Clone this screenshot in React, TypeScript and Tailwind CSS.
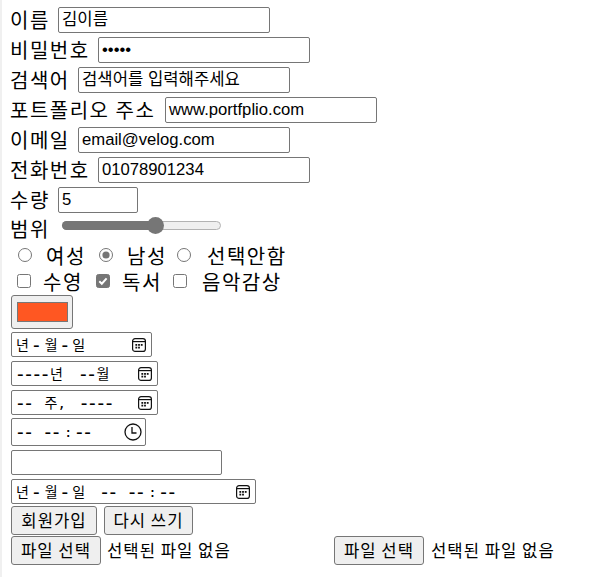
import React from "react";

const KR = "font-['Noto_Sans_CJK_KR',sans-serif]";
const INP = "font-['Liberation_Sans','Noto_Sans_CJK_KR',sans-serif]";
const MONO = "font-['DejaVu_Sans_Mono','Noto_Sans_CJK_KR',monospace]";

function TextField({ label, value, labelClass, inputClass }: { label: string; value: string; labelClass: string; inputClass: string }) {
  return (
    <div className="flex items-center h-[30px]">
      <span className={`leading-none whitespace-pre tracking-[1.5px] ${labelClass}`}>{label}</span>
      <div
        className={`ml-[8px] h-[26px] border border-[#767676] rounded-[2px] bg-white flex items-center pl-[3px] ${INP} text-[16.67px] leading-none whitespace-pre ${inputClass}`}
      >
        {value}
      </div>
    </div>
  );
}

function Radio({ checked }: { checked?: boolean }) {
  return (
    <svg width="14" height="14" viewBox="0 0 14 14" className="shrink-0 block">
      <circle cx="7" cy="7" r="6.5" fill="white" stroke="#767676" strokeWidth="1" />
      {checked && <circle cx="7" cy="7" r="3.6" fill="#767676" />}
    </svg>
  );
}

function Check({ checked }: { checked?: boolean }) {
  return (
    <svg width="14" height="14" viewBox="0 0 14 14" className="shrink-0 block">
      <rect x="0.5" y="0.5" width="13" height="13" rx="2" fill={checked ? "#767676" : "white"} stroke="#767676" />
      {checked && <path d="M3.3 7.3 L5.8 9.7 L10.6 4.4" stroke="white" strokeWidth="2" fill="none" />}
    </svg>
  );
}

function CalIcon() {
  return (
    <svg width="14" height="14" viewBox="0 0 14 14" className="shrink-0 block">
      <rect x="0.6" y="0.6" width="12.8" height="12.8" rx="2.5" fill="none" stroke="#111" strokeWidth="1.2" />
      <line x1="0.6" y1="3.6" x2="13.4" y2="3.6" stroke="#111" strokeWidth="1.2" />
      <rect x="3.4" y="6" width="1.8" height="1.8" fill="#111" />
      <rect x="6.1" y="6" width="1.8" height="1.8" fill="#111" />
      <rect x="8.8" y="6" width="1.8" height="1.8" fill="#111" />
      <rect x="3.4" y="8.7" width="1.8" height="1.8" fill="#111" />
      <rect x="6.1" y="8.7" width="1.8" height="1.8" fill="#111" />
    </svg>
  );
}

function ClockIcon() {
  return (
    <svg width="18" height="18" viewBox="0 0 18 18" className="shrink-0 block">
      <circle cx="9" cy="9" r="8" fill="none" stroke="#111" strokeWidth="1.3" />
      <path d="M8 4 L8 10 L12.5 10" fill="none" stroke="#111" strokeWidth="1.3" />
    </svg>
  );
}

function Dashes({ n, className = "" }: { n: number; className?: string }) {
  return (
    <span className={`font-['Liberation_Sans',sans-serif] text-[20px] tracking-[1.6px] leading-none ${className}`}>
      {"-".repeat(n)}
    </span>
  );
}

function TimePieces() {
  return (
    <>
      <Dashes n={2} />
      <Dashes n={2} className="ml-[11px]" />
      <span className="ml-[3px]">:</span>
      <Dashes n={2} className="ml-[3.5px]" />
    </>
  );
}

function DatePieces() {
  return (
    <>
      <span>년</span>
      <Dashes n={1} className="ml-[4px]" />
      <span className="ml-[3.5px]">월</span>
      <Dashes n={1} className="ml-[4px]" />
      <span className="ml-[2.5px]">일</span>
    </>
  );
}

const boxBase = `ml-[1px] border border-[#767676] rounded-[2px] bg-white flex items-center pl-[4px] ${MONO} text-[14px] leading-none whitespace-pre`;
const btnBase = `h-[29px] border border-[#767676] rounded-[3px] bg-[#efefef] flex items-center justify-center ${KR} text-[16.67px] tracking-[1px] leading-none whitespace-pre`;
const opt = "leading-none whitespace-pre tracking-[1.5px]";

export default function App() {
  return (
    <div className={`w-[598px] h-[577px] bg-white border-l-2 border-[#f0f0f0] pl-[8px] pt-[5px] flex flex-col items-start ${KR} text-[20px] text-black overflow-hidden`}>
      <TextField label="이름" value="김이름" labelClass="w-[40px]" inputClass="w-[212px]" />
      <TextField label="비밀번호" value="•••••" labelClass="w-[80px]" inputClass="w-[212px]" />
      <TextField label="검색어" value="검색어를 입력해주세요" labelClass="w-[60px]" inputClass="w-[212px]" />
      <TextField label="포트폴리오 주소" value="www.portfplio.com" labelClass="w-[147px]" inputClass="w-[212px]" />
      <TextField label="이메일" value="email@velog.com" labelClass="w-[60px]" inputClass="w-[212px]" />
      <TextField label="전화번호" value="01078901234" labelClass="w-[80px]" inputClass="w-[212px]" />
      <TextField label="수량" value="5" labelClass="w-[40px]" inputClass="w-[80px]" />

      {/* range */}
      <div className="flex items-center h-[27px]">
        <span className={`${opt} w-[40px]`}>범위</span>
        <div className="relative ml-[12px] mb-[6px] w-[159px] h-[9px] rounded-full bg-[#efefef] border border-[#b2b2b2]">
          <div className="absolute left-[-1px] top-[-1px] h-[9px] w-[95px] rounded-full bg-[#767676]" />
          <div className="absolute left-[84px] top-[-5px] w-[17px] h-[17px] rounded-full bg-[#767676]" />
        </div>
      </div>

      {/* radios */}
      <div className="flex items-center h-[27px]">
        <span className="ml-[8px] mb-[2px]"><Radio /></span>
        <span className={`${opt} ml-[14px] w-[40px]`}>여성</span>
        <span className="ml-[13px] mb-[2px]"><Radio checked /></span>
        <span className={`${opt} ml-[14px] w-[40px]`}>남성</span>
        <span className="ml-[10px] mb-[2px]"><Radio /></span>
        <span className={`${opt} ml-[16px] w-[80px]`}>선택안함</span>
      </div>

      {/* checkboxes */}
      <div className="flex items-center h-[26px]">
        <span className="ml-[7px] mb-[2px]"><Check /></span>
        <span className={`${opt} ml-[12px] w-[40px]`}>수영</span>
        <span className="ml-[13px] mb-[2px]"><Check checked /></span>
        <span className={`${opt} ml-[12px] w-[40px]`}>독서</span>
        <span className="ml-[11px] mb-[2px]"><Check /></span>
        <span className={`${opt} ml-[15px] w-[80px]`}>음악감상</span>
      </div>

      {/* color */}
      <div className="ml-[1px] w-[62px] h-[34px] border border-[#767676] rounded-[3px] bg-[#efefef] flex items-center justify-center">
        <div className="w-[51px] h-[20px] border border-[#777777] bg-[#ff5722]" />
      </div>

      {/* date */}
      <div className={`${boxBase} mt-[3px] w-[141px] h-[25px]`}>
        <DatePieces />
        <span className="ml-auto mr-[5px]"><CalIcon /></span>
      </div>

      {/* month */}
      <div className={`${boxBase} mt-[4px] w-[147px] h-[25px]`}>
        <Dashes n={4} className="ml-[1px]" />
        <span>년</span>
        <Dashes n={2} className="ml-[17px]" />
        <span>월</span>
        <span className="ml-auto mr-[5px]"><CalIcon /></span>
      </div>

      {/* week */}
      <div className={`${boxBase} mt-[4px] w-[147px] h-[25px]`}>
        <Dashes n={2} className="ml-[1px]" />
        <span className="ml-[11px]">주</span>
        <span>,</span>
        <Dashes n={4} className="ml-[15px]" />
        <span className="ml-auto mr-[5px]"><CalIcon /></span>
      </div>

      {/* time */}
      <div className={`${boxBase} mt-[3px] w-[135px] h-[28px]`}>
        <span className="ml-[1px]" />
        <TimePieces />
        <span className="ml-auto mr-[3px]"><ClockIcon /></span>
      </div>

      {/* empty */}
      <div className="ml-[1px] mt-[4px] w-[211px] h-[25px] border border-[#767676] rounded-[2px] bg-white" />

      {/* datetime-local */}
      <div className={`${boxBase} mt-[4px] w-[245px] h-[25px]`}>
        <DatePieces />
        <span className="ml-[16px] flex items-center"><TimePieces /></span>
        <span className="ml-auto mr-[5px]"><CalIcon /></span>
      </div>

      {/* buttons */}
      <div className="flex items-center mt-[2px]">
        <div className={`${btnBase} ml-[1px] w-[86px]`}>회원가입</div>
        <div className={`${btnBase} ml-[7px] w-[89px]`}>다시 쓰기</div>
      </div>

      {/* file inputs */}
      <div className="flex items-center mt-[1px]">
        <div className="flex items-center w-[324px]">
          <div className={`${btnBase} ml-[1px] w-[90px]`}>파일 선택</div>
          <span className="ml-[6px] text-[16.67px] tracking-[1px] leading-none whitespace-pre">선택된 파일 없음</span>
        </div>
        <div className="flex items-center">
          <div className={`${btnBase} w-[90px]`}>파일 선택</div>
          <span className="ml-[7px] text-[16.67px] tracking-[1px] leading-none whitespace-pre">선택된 파일 없음</span>
        </div>
      </div>
    </div>
  );
}
